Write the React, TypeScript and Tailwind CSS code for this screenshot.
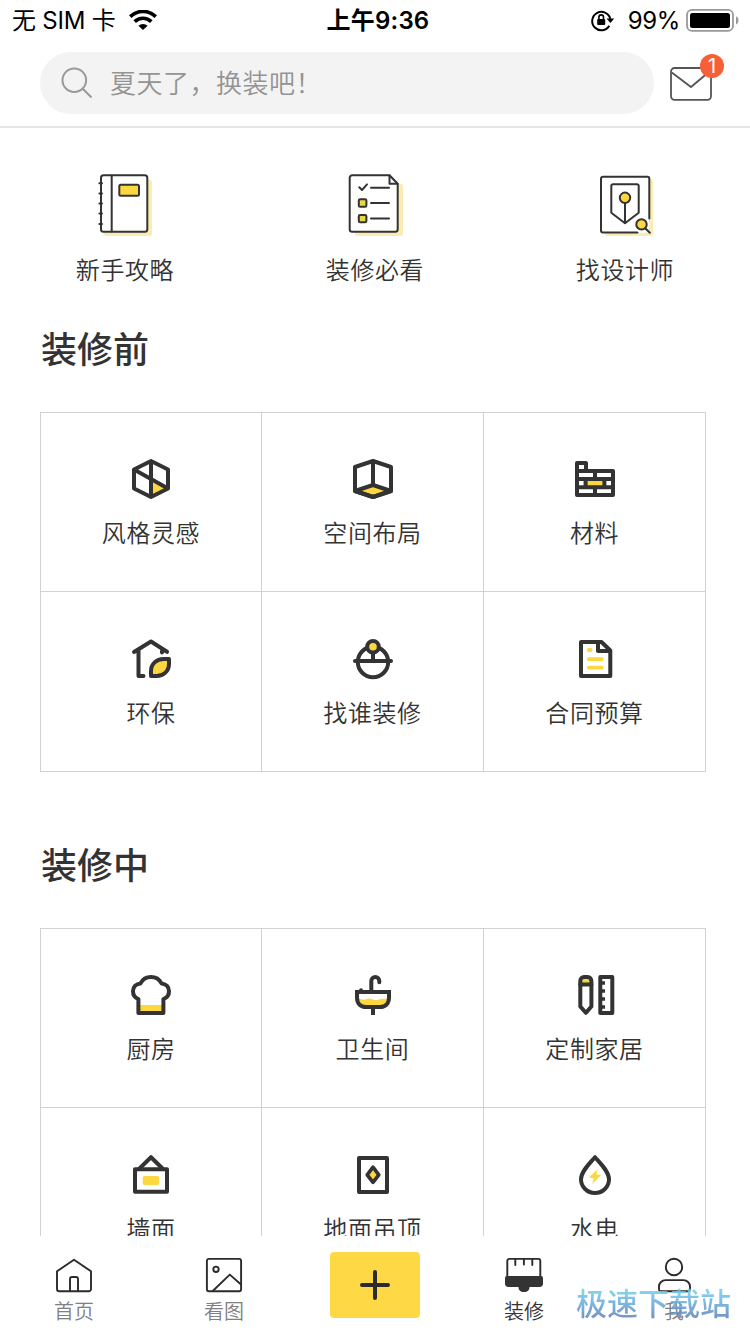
import React from "react";

type Item = { label: string; icon: React.ReactNode };

const DARK = "#333333";
const YELLOW = "#fdd73f";
const SHADOW = "#fbecb3";

const CellIcon = ({ children }: { children: React.ReactNode }) => (
  <svg
    className="size-10 overflow-visible"
    viewBox="0 0 40 40"
    fill="none"
    stroke={DARK}
    strokeWidth={4}
    strokeLinejoin="round"
    strokeLinecap="round">
    {children}
  </svg>
);

const FeatureIcon = ({ children }: { children: React.ReactNode }) => (
  <svg
    className="h-[62px] w-14"
    viewBox="0 0 56 62"
    fill="none"
    stroke={DARK}
    strokeWidth={2}
    strokeLinejoin="round"
    strokeLinecap="round">
    {children}
  </svg>
);

const NavIcon = ({ children }: { children: React.ReactNode }) => (
  <svg
    className="h-9 w-10"
    viewBox="0 0 40 36"
    fill="none"
    stroke="#2b2b2b"
    strokeWidth={1.9}
    strokeLinejoin="round"
    strokeLinecap="round">
    {children}
  </svg>
);

const features: Item[] = [
  {
    label: "新手攻略",
    icon: (
      <FeatureIcon>
        <rect x="7" y="6" width="48" height="56" rx="2" fill={SHADOW} stroke="none" />
        <rect x="4" y="1.2" width="46.3" height="56.5" rx="2.5" fill="#fff" />
        <path d="M14.7 1.5V57.5" />
        <path d="M2.4 9.2H5M2.4 19.4H5M2.4 29.5H5M2.4 39.6H5M2.4 50H5" />
        <rect x="22.3" y="10.8" width="19.7" height="11" rx="1.5" fill={YELLOW} />
      </FeatureIcon>
    ),
  },
  {
    label: "装修必看",
    icon: (
      <FeatureIcon>
        <rect x="8" y="10" width="48" height="52" rx="2" fill={SHADOW} stroke="none" />
        <path
          d="M5 1.2H42.5L50.7 9.7V55.2a2.5 2.5 0 0 1-2.5 2.5H5.2a2.5 2.5 0 0 1-2.5-2.5V3.7a2.5 2.5 0 0 1 2.5-2.5Z"
          fill="#fff"
        />
        <path d="M42.5 1.5V9.7H50.5" />
        <path d="M12.3 13.3L15 16L20 10.4M24 13.7H42M24 29H42M24 44.6H42" />
        <rect x="11.8" y="25.3" width="7.6" height="7.4" rx="1.3" fill="#e9d64c" />
        <rect x="11.8" y="40.9" width="7.6" height="7.4" rx="1.3" fill="#e9d64c" />
      </FeatureIcon>
    ),
  },
  {
    label: "找设计师",
    icon: (
      <FeatureIcon>
        <rect x="8" y="5" width="48" height="57" rx="2" fill={SHADOW} stroke="none" />
        <rect x="4" y="2.7" width="48" height="56" fill="#fff" stroke="none" />
        <path d="M52.3 44.5V4.7a2 2 0 0 0-2-2H6a2 2 0 0 0-2 2V56.5a2 2 0 0 0 2 2H40.5" />
        <path d="M14.3 12a1.7 1.7 0 0 1 1.7-1.7H40a1.7 1.7 0 0 1 1.7 1.7V38.7L28 49.3L14.3 38.7Z" />
        <path d="M28 29V49" />
        <circle cx="28" cy="23.8" r="5.2" fill={YELLOW} />
        <circle cx="44.5" cy="50.4" r="8" fill="#fff" stroke="none" />
        <path d="M48.5 54.5L52.8 58.8" />
        <circle cx="44.5" cy="50.4" r="5.2" fill={YELLOW} />
      </FeatureIcon>
    ),
  },
];

const before: Item[] = [
  {
    label: "风格灵感",
    icon: (
      <CellIcon>
        <path d="M20 20L37 29.5L20 38Z" fill={YELLOW} stroke="none" />
        <path d="M20 2L37 10.5V29.5L20 38L3 29.5V10.5ZM20 2V38M3 10.5L37 29.5" />
      </CellIcon>
    ),
  },
  {
    label: "空间布局",
    icon: (
      <CellIcon>
        <path d="M2 32L20 26L38 32L20 38Z" fill={YELLOW} />
        <path d="M20 2L38 8V32L20 38L2 32V8ZM20 2V26" />
      </CellIcon>
    ),
  },
  {
    label: "材料",
    icon: (
      <CellIcon>
        <rect x="10" y="20" width="20" height="8" fill={YELLOW} stroke="none" />
        <path d="M2 4H11V12H38V36H2ZM2 12H11M2 20H38M2 28.2H38M20 12V20M20 28V36M10.6 20V28M29.4 20V28" />
      </CellIcon>
    ),
  },
  {
    label: "环保",
    icon: (
      <CellIcon>
        <path d="M3 13L20 2.5L36 12.8M7.5 12V37H12.5M31 12V13.5" />
        <path d="M20 37V32C20 25 25.5 20 32.5 20H38V25C38 32 32.5 37 25.5 37Z" fill={YELLOW} />
      </CellIcon>
    ),
  },
  {
    label: "找谁装修",
    icon: (
      <CellIcon>
        <circle cx="20" cy="23" r="15.2" />
        <path d="M2 22H38M20 14V22" />
        <circle cx="20" cy="7.8" r="5.8" fill={YELLOW} />
      </CellIcon>
    ),
  },
  {
    label: "合同预算",
    icon: (
      <CellIcon>
        <path d="M6 3H26.5L35.3 11.5V37H6Z" />
        <path d="M23 3.5V12H35" />
        <path d="M13.8 11H15.6M13.8 20.2H26.8M13.8 28.7H26.8" stroke={YELLOW} strokeWidth={3.8} />
      </CellIcon>
    ),
  },
];

const during: Item[] = [
  {
    label: "厨房",
    icon: (
      <CellIcon>
        <rect x="7" y="30" width="25" height="8" fill={YELLOW} stroke="none" />
        <path d="M7.4 38V24.2C4 22.8 2 20 2 16.2C2 11.8 5.3 8.7 9.5 8.4C11.5 4.5 15 2 20 2S28.5 4.5 30.5 8.4C34.7 8.7 38 11.8 38 16.2C38 20 36 22.8 32.4 24.2V38Z" />
      </CellIcon>
    ),
  },
  {
    label: "卫生间",
    icon: (
      <CellIcon>
        <path
          d="M4 24.5C7 22.5 9 25.5 12 24.5S17 23 20 24.5S25 24.5 28 24S33 24 36 24V27L31 32H9L4 27Z"
          fill={YELLOW}
          stroke="none"
        />
        <path d="M4 17V22.5C4 28.5 7.5 32 13 32H27C32.5 32 36 28.5 36 22.5V17Z" strokeLinejoin="miter" />
        <path d="M18.3 16V6A4 4 0 0 1 26.3 6V7.3M8 15.3V16" />
        <path d="M20 33V40" strokeLinecap="butt" />
      </CellIcon>
    ),
  },
  {
    label: "定制家居",
    icon: (
      <CellIcon>
        <path d="M5.3 9.5V6C5.3 3.5 7 2 9 2H12.7C14.7 2 16.4 3.5 16.4 6V9.5Z" fill="#f0d83e" />
        <path d="M5.3 9.5V31.5L10.8 37.8L16.4 31.5V9.5" />
        <rect x="25.3" y="2" width="12" height="36" />
        <path d="M26 8H30M26 16H30M26 24H30M26 32H30" strokeWidth={3.6} strokeLinecap="butt" />
      </CellIcon>
    ),
  },
  {
    label: "墙面",
    icon: (
      <CellIcon>
        <rect x="4" y="14.2" width="32" height="22.6" />
        <path d="M8.5 13.5L20 2.2L31.5 13.5" />
        <rect x="11.7" y="21" width="16.5" height="9" rx="2" fill={YELLOW} stroke="none" />
      </CellIcon>
    ),
  },
  {
    label: "地面吊顶",
    icon: (
      <CellIcon>
        <rect x="6" y="3" width="28" height="34" />
        <path d="M20 12.2L25.8 19.8L20 27.4L14.2 19.8Z" fill={YELLOW} strokeWidth={3.6} />
      </CellIcon>
    ),
  },
  {
    label: "水电",
    icon: (
      <CellIcon>
        <path d="M20 2.2C14.5 8.5 6 16.5 6 24.3A14 13.7 0 0 0 34 24.3C34 16.5 25.5 8.5 20 2.2Z" />
        <path d="M22.8 14L14 22.5L18.8 23.5L17.3 29L26 20.3L21.2 19.3Z" fill={YELLOW} stroke="none" />
      </CellIcon>
    ),
  },
];

const StatusBar = () => (
  <div className="flex h-10 shrink-0 items-center justify-between pt-0.5 pr-[10px] pl-3 text-2xl text-black">
    <div className="flex w-[240px] items-center gap-[13px]">
      <span className="tracking-[-0.2px] whitespace-nowrap">无 SIM 卡</span>
      <svg className="mb-0.5 h-5 w-7" viewBox="0 0 28 20" fill="none" stroke="#000">
        <path d="M1.2 6.6A18.3 18.3 0 0 1 26.8 6.6" strokeWidth="3.6" />
        <path d="M5.7 11.6A11.8 11.8 0 0 1 22.3 11.6" strokeWidth="3.6" />
        <path d="M9.4 15.8A6.6 6.6 0 0 1 18.6 15.8L14 20Z" fill="#000" stroke="none" />
      </svg>
    </div>
    <span className="ml-1 font-semibold tracking-[0.2px]">上午9:36</span>
    <div className="flex w-[240px] items-center justify-end">
      <svg className="mr-[13px] mb-0.5 h-6 w-[25px]" viewBox="0 0 25 24" fill="none" stroke="#000" strokeWidth="2">
        <path d="M19.3 17.8A9.2 9.2 0 1 1 20.3 10.8" />
        <path d="M16.5 10.4H24.2L20.4 15Z" fill="#000" stroke="none" />
        <rect x="7.2" y="11" width="8" height="6" rx="1" fill="#000" stroke="none" />
        <path d="M8.9 11.5V9.2A2.3 2.3 0 0 1 13.5 9.2V11.5" strokeWidth="1.6" />
      </svg>
      <span className="tracking-[-0.4px]">99%</span>
      <svg className="mb-0.5 ml-[6px] h-6 w-[54px]" viewBox="0 0 54 24">
        <rect x="1" y="1.9" width="46" height="21" rx="5" fill="none" stroke="#999" strokeWidth="1.8" />
        <rect x="4" y="4.9" width="40" height="15" rx="2.5" fill="#000" />
        <path d="M50 8.3C53.3 9.5 53.3 15.3 50 16.5Z" fill="#999" />
      </svg>
    </div>
  </div>
);

const SearchBar = () => (
  <div className="flex h-22 shrink-0 items-start border-b-2 border-[#e5e5e5] pt-3 pl-10">
    <div className="flex h-[62px] w-[614px] items-center rounded-full bg-[#f3f3f3] pl-[21px]">
      <svg className="size-8" viewBox="0 0 32 32" fill="none" stroke="#999" strokeWidth="2">
        <circle cx="13.3" cy="13.2" r="11.8" />
        <path d="M21.5 21.5L30.5 30.5" />
      </svg>
      <span className="ml-[17px] text-[26px] font-[350] tracking-[0.5px] text-[#949494]">夏天了，换装吧！</span>
    </div>
    <div className="relative mt-[14px] ml-4">
      <svg className="h-[36px] w-[42px]" viewBox="0 0 42 36" fill="none" stroke="#555" strokeWidth="1.8">
        <rect x="1" y="2" width="40" height="31.8" rx="3.5" />
        <path d="M1.8 6.5L21 21L40 5" />
      </svg>
      <span className="absolute -top-3 left-[30px] flex size-6 items-center justify-center rounded-full bg-[#f65f37] text-xl text-white">
        1
      </span>
    </div>
  </div>
);

const Section = ({ title, items }: { title: string; items: Item[] }) => (
  <section className="px-10">
    <h2 className="pl-px text-4xl leading-10 font-medium">{title}</h2>
    <div className="mt-[42px] grid w-[666px] grid-cols-[221px_222px_222px] grid-rows-[179px_180px] border-t border-l border-[#d2d2d2]">
      {items.map((item) => (
        <div
          key={item.label}
          className="flex flex-col items-center border-r border-b border-[#d2d2d2] pt-[46px] nth-[n+4]:pt-[47px]">
          {item.icon}
          <span className="mt-[21px] text-2xl leading-7 font-[350] tracking-[0.6px]">{item.label}</span>
        </div>
      ))}
    </div>
  </section>
);

const NavItem = ({ label, active, children }: { label: string; active?: boolean; children: React.ReactNode }) => (
  <div className="flex w-[150px] flex-col items-center pt-[21px] pr-0.5">
    <NavIcon>{children}</NavIcon>
    <span
      className={
        active
          ? "mt-[7px] text-xl leading-6 font-[350] text-[#333]"
          : "mt-[7px] text-xl leading-6 font-[350] text-[#808080]"
      }>
      {label}
    </span>
  </div>
);

const TabBar = () => (
  <nav className="relative flex h-[98px] shrink-0 bg-white">
    <NavItem label="首页">
      <path d="M3 14.3L20 2.7L37 14.3V32A2.3 2.3 0 0 1 34.7 34.3H5.3A2.3 2.3 0 0 1 3 32Z" />
      <path d="M16 34V22A2 2 0 0 1 18 20H22A2 2 0 0 1 24 22V34" />
    </NavItem>
    <NavItem label="看图">
      <rect x="2.9" y="1.9" width="34.2" height="32.3" rx="2" />
      <circle cx="12" cy="12.3" r="2.7" />
      <path d="M9 33.8L25.8 17.6L37 27.5" />
    </NavItem>
    <div className="w-[150px] pt-4 pl-[30px]">
      <button className="flex h-[66px] w-[90px] items-center justify-center rounded bg-[#fed945]">
        <svg className="size-[30px]" viewBox="0 0 30 30" stroke="#2b2b2b" strokeWidth="4" strokeLinecap="round">
          <path d="M15 2V28M2 15H28" />
        </svg>
      </button>
    </div>
    <NavItem label="装修" active>
      <path d="M3.3 21V3.9A2 2 0 0 1 5.3 1.9H34.3A2 2 0 0 1 36.3 3.9V21M11.3 2V8M19.9 2V7.5M28.3 2V8" />
      <path
        d="M3 19H37A2 2 0 0 1 39 21V27A3.5 3.5 0 0 1 35.5 30H25.5C25.5 33.5 23.5 35 20 35S14.5 33.5 14.5 30H4.5A3.5 3.5 0 0 1 1 27V21A2 2 0 0 1 3 19Z"
        fill={DARK}
        stroke="none"
      />
    </NavItem>
    <NavItem label="我">
      <circle cx="20" cy="10" r="8.2" />
      <path d="M6.5 34.3A2 2 0 0 1 5 32.3V29.5A6.5 6.5 0 0 1 11.5 23.1H29.5A6.5 6.5 0 0 1 36 29.5V32.3A2 2 0 0 1 34.5 34.3Z" />
    </NavItem>
    <span className="absolute top-[46px] left-[576px] bg-linear-to-b from-[#6fcdf0] from-20% to-[#5b78b4] to-90% bg-clip-text text-[31px] leading-[44px] font-medium whitespace-nowrap text-transparent opacity-85">
      极速下载站
    </span>
  </nav>
);

const App = () => {
  return (
    <div className="flex h-[1334px] w-[750px] flex-col overflow-hidden bg-white font-[Inter,'Noto_Sans_CJK_SC',sans-serif] text-[#333]">
      <StatusBar />
      <SearchBar />
      <main className="min-h-0 flex-1 overflow-hidden">
        <div className="grid grid-cols-3 pt-[46px]">
          {features.map((item) => (
            <div key={item.label} className="flex flex-col items-center">
              {item.icon}
              <span className="mt-[21px] text-2xl leading-7 font-[350] tracking-[0.6px]">{item.label}</span>
            </div>
          ))}
        </div>
        <div className="mt-[45px] flex flex-col gap-[74px]">
          <Section title="装修前" items={before} />
          <Section title="装修中" items={during} />
        </div>
      </main>
      <TabBar />
    </div>
  );
};

export default App;
